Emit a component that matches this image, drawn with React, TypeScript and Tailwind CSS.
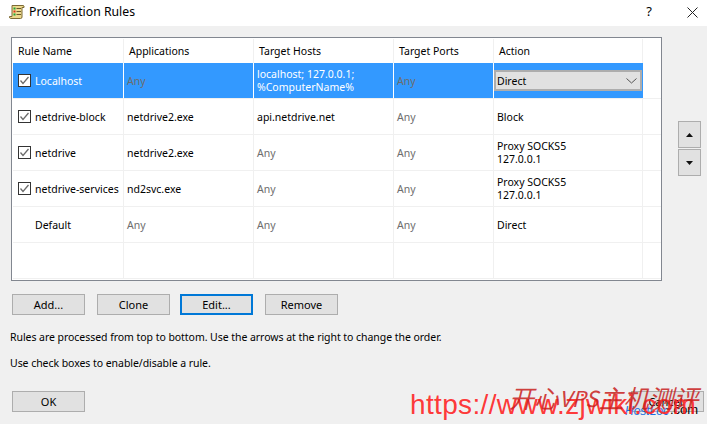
import * as React from "react";

const rows = [
  { name: "netdrive-block", check: true, app: "netdrive2.exe", hosts: ["api.netdrive.net"], action: ["Block"] },
  { name: "netdrive", check: true, app: "netdrive2.exe", hosts: [], action: ["Proxy SOCKS5", "127.0.0.1"] },
  { name: "netdrive-services", check: true, app: "nd2svc.exe", hosts: [], action: ["Proxy SOCKS5", "127.0.0.1"] },
  { name: "Default", check: false, app: "", hosts: [], action: ["Direct"] },
];

function Check() {
  return (
    <span className="flex h-[13px] w-[13px] shrink-0 items-center justify-center border border-[#333] bg-white">
      <svg width="11" height="11" viewBox="0 0 11 11" fill="none">
        <path d="M1.5 5.5 L4 8.5 L9.5 2" stroke="#6b6b6b" strokeWidth="1.3" />
      </svg>
    </span>
  );
}

function Btn({ label, focus, className }: { label: string; focus?: boolean; className?: string }) {
  return (
    <button
      className={`h-[21px] w-[73px] bg-[#e1e1e1] text-[11px] leading-[17px] text-black ${
        focus ? "border-2 border-[#0078d7]" : "border border-[#adadad]"
      } ${className ?? ""}`}
    >
      {label}
    </button>
  );
}

function Any() {
  return <span className="text-[#6d6d6d]">Any</span>;
}

function ScrollIcon() {
  return (
    <svg width="16" height="16" viewBox="0 0 16 16">
      <path d="M3 1.5 H14 Q15.5 1.5 15 3.5 H13 V13 Q13 14.5 11.5 14.5 H1.5 Q0.5 14.5 0.5 12.5 H3 Z" fill="#ecd98e" stroke="#7d6a35" />
      <rect x="4.5" y="3.5" width="2" height="2" fill="#1fa83a" />
      <rect x="4.5" y="6.5" width="2" height="2" fill="#e0301e" />
      <rect x="4.5" y="9.5" width="2" height="2" fill="#1fa83a" />
      <path d="M7.5 4.5 H12 M7.5 7.5 H12 M7.5 10.5 H12" stroke="#6b5a2a" />
    </svg>
  );
}

export default function App() {
  return (
    <div className="relative flex h-[424px] w-[707px] flex-col overflow-hidden bg-[#f0f0f0] font-['Noto_Sans',sans-serif] text-[10.5px] text-black">
      {/* title bar */}
      <div className="flex h-[26px] items-center bg-white pb-[2px] pl-[9px] pr-[9px]">
        <ScrollIcon />
        <span className="ml-1 text-[12.25px]">Proxification Rules</span>
        <span className="ml-auto text-[13px]">?</span>
        <svg className="ml-[35px]" width="11" height="11" viewBox="0 0 11 11">
          <path d="M0.5 0.5 L10.5 10.5 M10.5 0.5 L0.5 10.5" stroke="#222" />
        </svg>
      </div>

      {/* rule list + arrows */}
      <div className="flex pl-[11px] pt-[11px]">
        <div className="h-[244px] w-[651px] border border-[#828790] bg-white pl-[1px] pt-[1px]">
          <div className="flex h-[24px] items-center">
            <div className="h-full w-[111px] border-r border-[#f0f0f0] pl-[5px] leading-[24px]">Rule Name</div>
            <div className="h-full w-[130px] border-r border-[#f0f0f0] pl-[5px] leading-[24px]">Applications</div>
            <div className="h-full w-[140px] border-r border-[#f0f0f0] pl-[5px] leading-[24px]">Target Hosts</div>
            <div className="h-full w-[100px] border-r border-[#f0f0f0] pl-[5px] leading-[24px]">Target Ports</div>
            <div className="h-full w-[149px] border-r border-[#f0f0f0] pl-[5px] leading-[24px]">Action</div>
          </div>

          {/* selected row */}
          <div className="flex h-[36px] border-b border-[#f0f0f0]">
            <div className="flex w-[111px] items-center border-r border-white bg-[#3399ff] pl-[5px] text-white">
              <Check />
              <span className="ml-1 mt-[2px]">Localhost</span>
            </div>
            <div className="flex w-[130px] items-center border-r border-white bg-[#3399ff] pl-[3px] pt-[2px] text-[#6d6d6d]">Any</div>
            <div className="flex w-[140px] items-center border-r border-white bg-[#3399ff] pl-[3px] leading-[13px] text-white">
              <span>
                localhost; 127.0.0.1;
                <br />
                %ComputerName%
              </span>
            </div>
            <div className="flex w-[100px] items-center border-r border-white bg-[#3399ff] pl-[3px] pt-[2px] text-[#6d6d6d]">Any</div>
            <div className="flex w-[149px] items-center bg-[#3399ff] pr-px">
              <div className="flex h-[21px] w-full items-center justify-between border-2 border-[#adadad] bg-[#e1e1e1] pl-[1px] pr-[3px]">
                <span className="mt-[2px]">Direct</span>
                <svg width="11" height="6" viewBox="0 0 11 6" fill="none">
                  <path d="M0.5 0.5 L5.5 5 L10.5 0.5" stroke="#555" />
                </svg>
              </div>
            </div>
          </div>

          {rows.map((row) => (
            <div key={row.name} className="flex h-[36px] border-b border-[#f0f0f0]">
              <div className="flex w-[111px] items-center border-r border-[#f0f0f0] pl-[5px]">
                {row.check ? <Check /> : <span className="h-[13px] w-[13px] shrink-0" />}
                <span className="ml-1 mt-[2px] whitespace-nowrap">{row.name}</span>
              </div>
              <div className="flex w-[130px] items-center border-r border-[#f0f0f0] pl-[3px] pt-[2px]">{row.app || <Any />}</div>
              <div className="flex w-[140px] items-center border-r border-[#f0f0f0] pl-[3px] pt-[2px]">
                {row.hosts.length ? row.hosts[0] : <Any />}
              </div>
              <div className="flex w-[100px] items-center border-r border-[#f0f0f0] pl-[3px] pt-[2px]">
                <Any />
              </div>
              <div
                className={`flex w-[149px] items-center border-r border-[#f0f0f0] pl-[3px] leading-[13px] ${
                  row.action[1] ? "" : "pt-[2px]"
                }`}
              >
                <span>
                  {row.action[0]}
                  {row.action[1] && <br />}
                  {row.action[1]}
                </span>
              </div>
            </div>
          ))}

          {/* empty row */}
          <div className="flex h-[36px] border-b border-[#f0f0f0]">
            <div className="w-[111px] border-r border-[#f0f0f0]" />
            <div className="w-[130px] border-r border-[#f0f0f0]" />
            <div className="w-[140px] border-r border-[#f0f0f0]" />
            <div className="w-[100px] border-r border-[#f0f0f0]" />
            <div className="w-[149px] border-r border-[#f0f0f0]" />
          </div>
        </div>

        <div className="ml-[16px] flex flex-col gap-px pt-[84px]">
          <button className="flex h-[27px] w-[23px] items-center justify-center border border-[#adadad] bg-[#e1e1e1]">
            <svg width="7" height="4" viewBox="0 0 7 4">
              <path d="M3.5 0 L7 4 H0 Z" fill="#111" />
            </svg>
          </button>
          <button className="flex h-[27px] w-[23px] items-center justify-center border border-[#adadad] bg-[#e1e1e1]">
            <svg width="7" height="4" viewBox="0 0 7 4">
              <path d="M0 0 H7 L3.5 4 Z" fill="#111" />
            </svg>
          </button>
        </div>
      </div>

      {/* buttons */}
      <div className="mt-[13px] flex pl-[12px]">
        <Btn label="Add..." />
        <Btn label="Clone" className="ml-[12px]" />
        <Btn label="Edit..." focus className="ml-[10px]" />
        <Btn label="Remove" className="ml-[12px]" />
      </div>

      <p className="mt-[14px] pl-[10px] leading-[16px] tracking-[-0.05px]">
        Rules are processed from top to bottom. Use the arrows at the right to change the order.
      </p>
      <p className="mt-[10px] pl-[10px] leading-[16px] tracking-[-0.05px]">Use check boxes to enable/disable a rule.</p>

      <div className="mt-[20px] flex justify-between pl-[12px] pr-[3px]">
        <Btn label="OK" />
        <Btn label="Cancel" className="pr-[4px]" />
      </div>

      {/* watermark */}
      <div className="absolute left-[625px] top-[404px] whitespace-nowrap font-['Liberation_Sans',sans-serif] text-[12px] italic leading-[14px] text-[#1a6fe0]">
        HostLoc
      </div>
      <div className="absolute left-[670px] top-[403px] whitespace-nowrap font-['Liberation_Sans',sans-serif] text-[13px] leading-[14px] text-black">
        .com
      </div>
      <div className="absolute left-[410px] top-[389px] whitespace-nowrap font-['Liberation_Sans',sans-serif] text-[28px] leading-[32px] tracking-[0.35px] text-[#ff2020]/90">
        https://www.zjwiki.com
      </div>
      <div className="absolute left-[509px] top-[382px] flex items-center whitespace-nowrap font-['Noto_Sans_CJK_SC',sans-serif] text-[25px] italic leading-[30px] text-[#c8201c]/85">
        开心<span className="text-[22px]">VPS</span>
        <span>主机测评</span>
      </div>
    </div>
  );
}
